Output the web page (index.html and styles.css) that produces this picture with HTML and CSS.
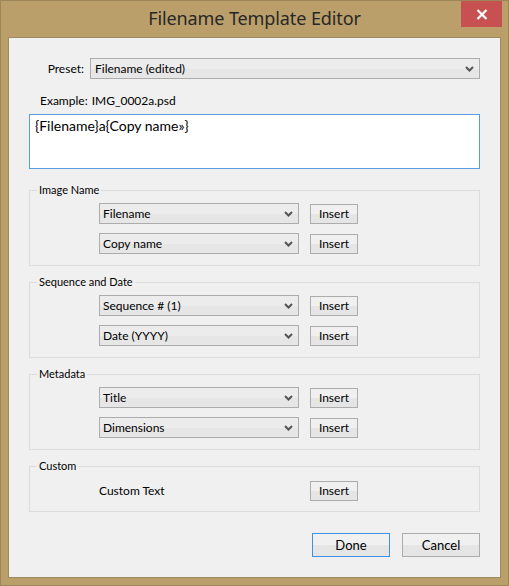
FILE: index.html
```html
<!DOCTYPE html>
<html lang="en">
<head>
<meta charset="utf-8">
<title>Filename Template Editor</title>
<link rel="stylesheet" href="styles.css">
</head>
<body>
<div class="window">
  <div class="titlebar">
    <span class="spacer"></span>
    <h1 class="title">Filename Template Editor</h1>
    <button class="close" aria-label="Close">
      <svg width="12" height="11" viewBox="0 0 12 11"><path d="M1.5 1 L10.5 10 M10.5 1 L1.5 10" stroke="#fff" stroke-width="2.2" fill="none"/></svg>
    </button>
  </div>

  <div class="client">
    <div class="preset-row">
      <span class="preset-label">Preset:</span>
      <div class="combo combo-wide">
        <span class="combo-text">Filename (edited)</span>
        <svg class="chev" width="9" height="6" viewBox="0 0 9 6"><path d="M1 1 L4.5 4.5 L8 1" stroke="#555" stroke-width="2" fill="none"/></svg>
      </div>
    </div>

    <div class="example">
      <span class="example-label">Example:</span>
      <span class="example-value">IMG_0002a.psd</span>
    </div>

    <div class="template">{Filename}a{Copy name»}</div>

    <fieldset class="group">
      <legend>Image Name</legend>
      <div class="rows">
        <div class="row">
          <div class="combo"><span class="combo-text">Filename</span><svg class="chev" width="9" height="6" viewBox="0 0 9 6"><path d="M1 1 L4.5 4.5 L8 1" stroke="#555" stroke-width="2" fill="none"/></svg></div>
          <button class="btn insert">Insert</button>
        </div>
        <div class="row">
          <div class="combo"><span class="combo-text">Copy name</span><svg class="chev" width="9" height="6" viewBox="0 0 9 6"><path d="M1 1 L4.5 4.5 L8 1" stroke="#555" stroke-width="2" fill="none"/></svg></div>
          <button class="btn insert">Insert</button>
        </div>
      </div>
    </fieldset>

    <fieldset class="group">
      <legend>Sequence and Date</legend>
      <div class="rows">
        <div class="row">
          <div class="combo"><span class="combo-text">Sequence # (1)</span><svg class="chev" width="9" height="6" viewBox="0 0 9 6"><path d="M1 1 L4.5 4.5 L8 1" stroke="#555" stroke-width="2" fill="none"/></svg></div>
          <button class="btn insert">Insert</button>
        </div>
        <div class="row">
          <div class="combo"><span class="combo-text">Date (YYYY)</span><svg class="chev" width="9" height="6" viewBox="0 0 9 6"><path d="M1 1 L4.5 4.5 L8 1" stroke="#555" stroke-width="2" fill="none"/></svg></div>
          <button class="btn insert">Insert</button>
        </div>
      </div>
    </fieldset>

    <fieldset class="group">
      <legend>Metadata</legend>
      <div class="rows">
        <div class="row">
          <div class="combo"><span class="combo-text">Title</span><svg class="chev" width="9" height="6" viewBox="0 0 9 6"><path d="M1 1 L4.5 4.5 L8 1" stroke="#555" stroke-width="2" fill="none"/></svg></div>
          <button class="btn insert">Insert</button>
        </div>
        <div class="row">
          <div class="combo"><span class="combo-text">Dimensions</span><svg class="chev" width="9" height="6" viewBox="0 0 9 6"><path d="M1 1 L4.5 4.5 L8 1" stroke="#555" stroke-width="2" fill="none"/></svg></div>
          <button class="btn insert">Insert</button>
        </div>
      </div>
    </fieldset>

    <fieldset class="group group-custom">
      <legend>Custom</legend>
      <div class="rows">
        <div class="row">
          <span class="custom-label">Custom Text</span>
          <button class="btn insert">Insert</button>
        </div>
      </div>
    </fieldset>

    <div class="actions">
      <button class="btn action default">Done</button>
      <button class="btn action">Cancel</button>
    </div>
  </div>
</div>
</body>
</html>
```

FILE: styles.css
```css
* {
  box-sizing: border-box;
}

html, body {
  margin: 0;
  padding: 0;
  background: #bb9f6b;
}

body {
  font-family: Lato, "Noto Sans", sans-serif;
  font-size: 12px;
  color: #000;
}

.window {
  width: 509px;
  height: 586px;
  background: #bb9f6b;
  border: 1px solid #9c8558;
  padding: 0 7px 7px 7px;
  display: flex;
  flex-direction: column;
}

/* ---- title bar ---- */
.titlebar {
  height: 36px;
  display: grid;
  grid-template-columns: 1fr auto 1fr;
  align-items: start;
}

.title {
  margin: 0;
  padding-top: 5px;
  font-family: "Noto Sans", sans-serif;
  font-weight: normal;
  font-size: 18px;
  line-height: 24px;
  color: #272727;
  letter-spacing: -0.1px;
}

.close {
  justify-self: end;
  width: 41px;
  height: 26px;
  margin-right: -1px;
  border: none;
  padding: 0;
  background: #c75050;
  display: flex;
  align-items: center;
  justify-content: center;
}

/* ---- client area ---- */
.client {
  flex: 1;
  background: #f0f0f0;
  border: 1px solid #a08b61;
  padding: 20px 20px 0 20px;
  display: flex;
  flex-direction: column;
}

.preset-row {
  display: flex;
  align-items: center;
  height: 21px;
}

.preset-label {
  width: 61px;
  text-align: right;
  padding-right: 6px;
}

/* ---- combo box ---- */
.combo {
  width: 200px;
  height: 21px;
  border: 1px solid #acacac;
  background: linear-gradient(#ececec 0, #ececec 55%, #e6e6e6 55%, #e6e6e6 100%);
  display: flex;
  align-items: center;
  justify-content: space-between;
  padding: 0 5px 0 3px;
}

.combo-wide {
  flex: 1;
  padding-left: 4px;
}

.combo-text {
  line-height: 16px;
  white-space: nowrap;
}

.chev {
  display: block;
  flex: none;
}

/* ---- example + template ---- */
.example {
  margin-top: 14px;
  padding-left: 11px;
  line-height: 16px;
  display: flex;
  gap: 4px;
}

.template {
  margin-top: 5px;
  height: 55px;
  background: #fff;
  border: 1px solid #569de5;
  padding: 2px 5px;
  font-size: 14px;
  line-height: 18px;
}

/* ---- group boxes ---- */
.group {
  margin: 14px 0 0 0;
  border: 1px solid #dcdcdc;
  padding: 0 0 11px 7px;
  min-width: 0;
}

.group + .group {
  margin-top: 9px;
}

.group legend {
  padding: 0 2px;
  font-size: 11px;
  line-height: 14px;
}

.rows {
  padding: 6px 0 0 62px;
  display: flex;
  flex-direction: column;
  gap: 9px;
}

.group-custom {
  padding-bottom: 10px;
}

.group-custom .rows {
  padding-top: 8px;
}

.row {
  display: flex;
  align-items: center;
  gap: 11px;
}

.custom-label {
  width: 200px;
  line-height: 16px;
}

/* ---- buttons ---- */
.btn {
  font-family: inherit;
  font-size: 12px;
  color: #000;
  border: 1px solid #acacac;
  background: linear-gradient(#f0f0f0 0, #f0f0f0 50%, #e5e5e5 50%, #e5e5e5 100%);
  padding: 0;
  line-height: 16px;
}

.insert {
  width: 48px;
  height: 20px;
}

.actions {
  margin-top: 21px;
  display: flex;
  justify-content: flex-end;
  gap: 12px;
}

.action {
  width: 78px;
  height: 24px;
  font-size: 13px;
}

.action.default {
  border-color: #3c93e6;
}
```
